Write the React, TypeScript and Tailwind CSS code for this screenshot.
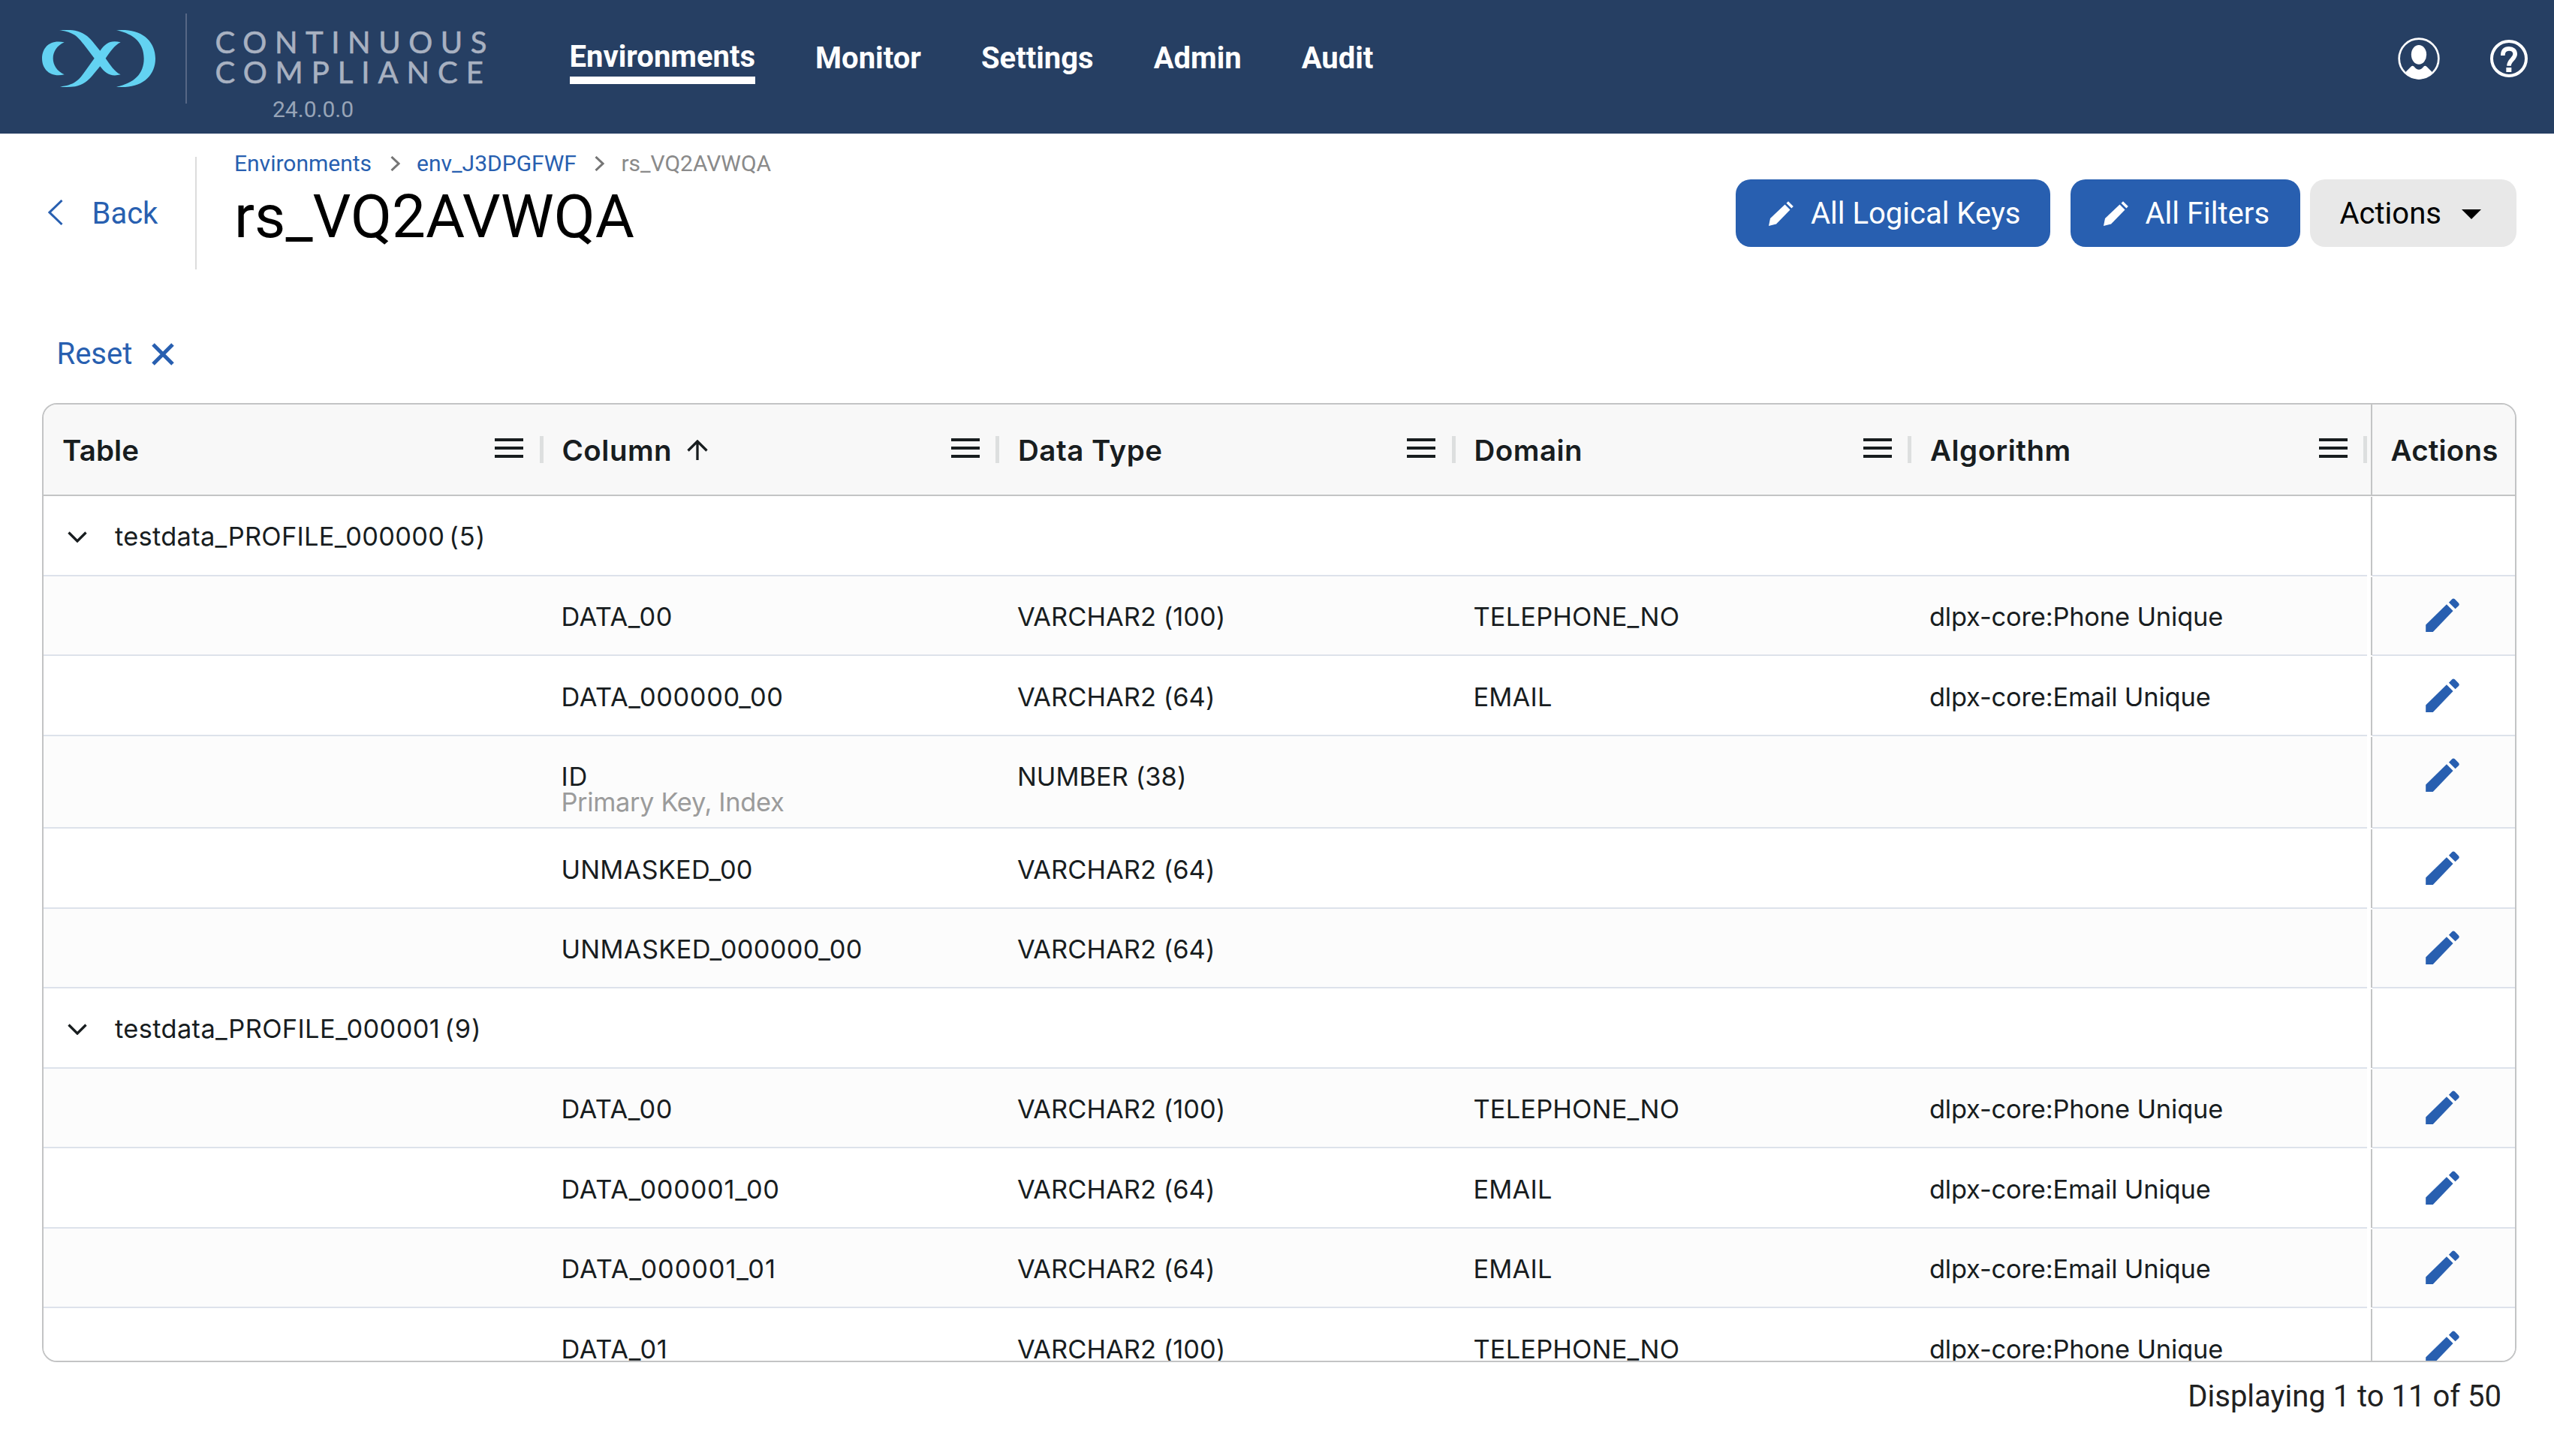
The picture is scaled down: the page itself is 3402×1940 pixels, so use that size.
import React from "react";

type Row =
  | { kind: "group"; name: string; count: number; spacing: string }
  | {
      kind: "data";
      column: string;
      spacing: string;
      note?: string;
      type: string;
      domain?: string;
      algorithm?: string;
    };

const PHONE = { domain: "TELEPHONE_NO", algorithm: "dlpx-core:Phone Unique" };
const EMAIL = { domain: "EMAIL", algorithm: "dlpx-core:Email Unique" };

const rows: Row[] = [
  { kind: "group", name: "testdata_PROFILE_000000", count: 5, spacing: "tracking-[0.3px]" },
  { kind: "data", column: "DATA_00", spacing: "tracking-[0.5px]", type: "VARCHAR2 (100)", ...PHONE },
  { kind: "data", column: "DATA_000000_00", spacing: "tracking-[0.6px]", type: "VARCHAR2 (64)", ...EMAIL },
  { kind: "data", column: "ID", spacing: "tracking-[0.8px]", note: "Primary Key, Index", type: "NUMBER (38)" },
  { kind: "data", column: "UNMASKED_00", spacing: "tracking-[0.2px]", type: "VARCHAR2 (64)" },
  { kind: "data", column: "UNMASKED_000000_00", spacing: "tracking-[0.3px]", type: "VARCHAR2 (64)" },
  { kind: "group", name: "testdata_PROFILE_000001", count: 9, spacing: "tracking-[0.37px]" },
  { kind: "data", column: "DATA_00", spacing: "tracking-[0.5px]", type: "VARCHAR2 (100)", ...PHONE },
  { kind: "data", column: "DATA_000001_00", spacing: "tracking-[0.7px]", type: "VARCHAR2 (64)", ...EMAIL },
  { kind: "data", column: "DATA_000001_01", spacing: "tracking-[0.9px]", type: "VARCHAR2 (64)", ...EMAIL },
  { kind: "data", column: "DATA_01", spacing: "tracking-[0.7px]", type: "VARCHAR2 (100)", ...PHONE },
];

function Logo() {
  return (
    <svg className="h-[76px] w-[151px] shrink-0" viewBox="78 60 453 228" fill="#63d2f2">
      <path d="M167 109C110 96 78 130 78 173C78 216 110 251 167 238C138 224 122 200 122 173C122 147 138 122 167 109Z" />
      <path d="M147 61C168 59 190 59 210 62C242 69 262 84 279 105L310 143C332 112 352 99 392 109C366 123 352 145 332 173C352 201 366 225 392 238C352 249 330 232 310 205L279 242C262 263 242 278 210 286C190 288 168 288 150 287C205 280 224 262 245 232L287 173L245 118C222 88 205 68 147 61Z" />
      <path d="M375 61C470 51 531 100 531 174C531 248 470 297 375 287C447 272 485 235 485 174C485 113 447 76 375 61Z" />
    </svg>
  );
}

function UserIcon() {
  return (
    <svg className="size-[56px] shrink-0" viewBox="132 150 168 168">
      <circle cx="216" cy="234" r="79" fill="none" stroke="#fff" strokeWidth="8" />
      <ellipse cx="216" cy="218.500" rx="30.500" ry="38.500" fill="#fff" />
      <path d="M163 288L184 267Q190 260 197 266C209 282 223 282 235 266Q241 260 248 267L269 288Q248 317 216 317Q184 317 163 288Z" fill="#fff" />
    </svg>
  );
}

function HelpIcon() {
  return (
    <svg className="size-[50px] shrink-0" viewBox="501 159 150 150">
      <circle cx="576" cy="234" r="69" fill="none" stroke="#fff" strokeWidth="12" />
      <path d="M551.500 222C551.500 203 560 194.500 576 194.500C592 194.500 600.500 203 600.500 216C600.500 236 576 240 576 263" fill="none" stroke="#fff" strokeWidth="17" />
      <path d="M565 270H586V288H565Z" fill="#fff" />
    </svg>
  );
}

function EditIcon() {
  return (
    <svg className="h-[45px] w-[45px] shrink-0" viewBox="0 0 135 136" fill="#285fb0">
      <path d="M0 136V107L84 25L110 51L29 136Z" />
      <path d="M93 17L106 4Q111 -1 117 4L131 18Q138 25 132 31L119 43Z" />
    </svg>
  );
}

function PencilIcon() {
  return (
    <svg className="size-[33px] shrink-0" viewBox="0 0 33 33" fill="#fff">
      <path d="M0 33L2 23L21.500 4.500L28.500 11.500L10 30.500Z" />
      <path d="M23.500 2.700L26 0.300L32.800 7L30.400 9.500Z" />
    </svg>
  );
}

function MenuIcon() {
  return (
    <div className="mt-[-4px] flex w-[38px] flex-col gap-[7.3px]">
      <div className="h-[3.8px] bg-[#181d1f]" />
      <div className="h-[3.8px] bg-[#181d1f]" />
      <div className="h-[3.8px] bg-[#181d1f]" />
    </div>
  );
}

function CrumbArrow() {
  return (
    <svg className="h-[20px] w-[13px] shrink-0" viewBox="0 0 13 20" fill="none" stroke="#757575" strokeWidth="3">
      <path d="M1.500 1L11 10L1.500 19" />
    </svg>
  );
}

function HeaderCell({ label, width, sorted }: { label: string; width: string; sorted?: boolean }) {
  return (
    <div className={`flex h-full items-center pl-[25px] ${width}`}>
      <span className="pt-[2px]">{label}</span>
      {sorted && (
        <svg className="ml-[20px] h-[27px] w-[28px]" viewBox="0 0 28 27" fill="none" stroke="#181d1f" strokeWidth="3.300">
          <path d="M14 27V2M1.500 14.500L14 2L26.500 14.500" />
        </svg>
      )}
      <div className="ml-auto flex items-center gap-[21.500px]">
        <MenuIcon />
        <div className="h-[36px] w-[5px] bg-[#dddfdf]" />
      </div>
    </div>
  );
}

function DataCell({ children, extra }: { children?: React.ReactNode; extra?: string }) {
  return <div className={`w-[607.5px] pt-px pl-[24.4px] ${extra ?? ""}`}>{children}</div>;
}

function TableRow({ row, striped }: { row: Row; striped: boolean }) {
  const tall = row.kind === "data" && !!row.note;
  const shade = striped ? "bg-[#fcfcfc]" : "bg-white";
  return (
    <div className={`flex shrink-0 ${tall ? "h-[123.9px]" : "h-[106.5px]"}`}>
      <div className={`flex w-[3095px] border-b-2 border-[#dde2eb] pt-[36.5px] leading-[34px] ${shade}`}>
        {row.kind === "group" ? (
          <div className="flex pl-[32px]">
            <svg className="mt-[10px] h-[15px] w-[26px]" viewBox="0 0 26 15" fill="none" stroke="#181d1f" strokeWidth="3.300">
              <path d="M1.500 1.500L13 13L24.500 1.500" />
            </svg>
            <span className={`ml-[37px] ${row.spacing}`}>{row.name}</span>
            <span className="ml-[6px] tracking-[1px]">({row.count})</span>
          </div>
        ) : (
          <>
            <div className="w-[665px]" />
            <DataCell>
              <div className={row.spacing}>{row.column}</div>
              {row.note && <div className="tracking-[-0.33px] text-[#9b9b9b]">{row.note}</div>}
            </DataCell>
            <DataCell extra="tracking-[0.04px]">{row.type}</DataCell>
            <DataCell extra="tracking-[0.2px]">{row.domain}</DataCell>
            <DataCell extra="tracking-[-0.16px]">{row.algorithm}</DataCell>
          </>
        )}
      </div>
      <div className="ml-[5px] w-[2px] py-px">
        <div className="h-full bg-[#c3c4c5]" />
      </div>
      <div className={`flex w-[190px] justify-center border-b-2 border-[#dde2eb] pt-[29.5px] pr-[3px] ${shade}`}>
        {row.kind === "data" && <EditIcon />}
      </div>
    </div>
  );
}

export default function App() {
  return (
    <div className="flex h-[1940px] w-[3402px] flex-col overflow-hidden bg-white font-['Roboto',sans-serif] text-[40px] leading-[48px] text-black">
      <header className="flex h-[178px] shrink-0 items-start bg-[#263f63] pr-[35px] pl-[56px]">
        <div className="mt-[40px]">
          <Logo />
        </div>
        <div className="mt-[18px] ml-[39.5px] h-[120px] w-[2.5px] bg-[#566785]" />
        <div className="mt-[36px] ml-[37.5px] w-[472px] font-['Lato',sans-serif] leading-[40px] text-[#a8b1c1]">
          <div className="tracking-[10.6px] [-webkit-text-stroke:0.6px_#a8b1c1]">CONTINUOUS</div>
          <div className="tracking-[10.97px] [-webkit-text-stroke:0.6px_#a8b1c1]">COMPLIANCE</div>
          <div className="mt-[12px] ml-[76.5px] font-['Roboto',sans-serif] text-[30px] leading-[36px] text-[#97a4b7]">24.0.0.0</div>
        </div>
        <nav className="mt-[52px] flex items-start gap-[80px] font-bold text-white">
          <div className="border-b-[10px] border-white pb-[2px]">Environments</div>
          <div className="mt-[2px]">Monitor</div>
          <div className="mt-[2px]">Settings</div>
          <div className="mt-[2px]">Admin</div>
          <div className="mt-[2px]">Audit</div>
        </nav>
        <div className="mt-[50px] ml-auto flex items-center gap-[67px]">
          <UserIcon />
          <HelpIcon />
        </div>
      </header>

      <div className="flex shrink-0 items-start pr-[50.5px]">
        <div className="mt-[83px] flex w-[260px] items-center pl-[64px] text-[#285fb0]">
          <svg className="mt-[-5px] h-[34px] w-[20px] shrink-0" viewBox="0 0 20 34" fill="none" stroke="#285fb0" strokeWidth="3">
            <path d="M18.500 1L2 17L18.500 33" />
          </svg>
          <span className="ml-[38.5px]">Back</span>
        </div>
        <div className="mt-[31px] h-[150px] w-[2px] bg-[#dcdcdc]" />
        <div className="mt-[21.5px] ml-[50px]">
          <div className="flex items-center text-[30px] leading-[36px]">
            <span className="text-[#285fb0]">Environments</span>
            <div className="ml-[25px]">
              <CrumbArrow />
            </div>
            <span className="ml-[22px] text-[#285fb0]">env_J3DPGFWF</span>
            <div className="ml-[24px]">
              <CrumbArrow />
            </div>
            <span className="ml-[22.5px] text-[#8a8a8a]">rs_VQ2AVWQA</span>
          </div>
          <h1 className="text-[80px] leading-[106px]">rs_VQ2AVWQA</h1>
        </div>
        <div className="mt-[61px] ml-auto flex">
          <button className="flex h-[90px] w-[419px] items-center rounded-[20px] bg-[#285fb0] pl-[44px] text-white">
            <PencilIcon />
            <span className="ml-[23px] pt-[2px]">All Logical Keys</span>
          </button>
          <button className="ml-[26.500px] flex h-[90px] w-[306px] items-center rounded-[20px] bg-[#285fb0] pl-[44px] text-white">
            <PencilIcon />
            <span className="ml-[23px] pt-[2px]">All Filters</span>
          </button>
          <button className="ml-[13.500px] flex h-[90px] w-[274.5px] items-center rounded-[20px] bg-[#e8e8e8] pl-[39.5px]">
            <span className="pt-[2px]">Actions</span>
            <svg className="mt-[2px] ml-[27px] h-[13px] w-[26px]" viewBox="0 0 26 13">
              <path d="M0 0H26L13 13Z" />
            </svg>
          </button>
        </div>
      </div>

      <div className="mt-[89px] flex shrink-0 items-center pl-[75.5px] text-[#285fb0]">
        <span>Reset</span>
        <svg className="ml-[25.5px] mt-[-1px] size-[30px]" viewBox="0 0 30 30" fill="none" stroke="#285fb0" strokeWidth="5">
          <path d="M2 2L28 28M28 2L2 28" />
        </svg>
      </div>

      <section className="mt-[41px] ml-[56px] flex h-[1278px] w-[3296px] shrink-0 flex-col overflow-hidden rounded-[20px] border-2 border-[#c3c4c5] bg-white font-['Inter',sans-serif] text-[34.4px] text-[#181d1f]">
        <div className="flex h-[122px] shrink-0 items-center border-b-2 border-[#c3c4c5] bg-[#f8f8f8] text-[38.5px] font-semibold tracking-[0.5px]">
          <HeaderCell label="Table" width="w-[665.5px] tracking-[0.1px]" />
          <HeaderCell label="Column" width="w-[607.5px]" sorted />
          <HeaderCell label="Data Type" width="w-[607.5px]" />
          <HeaderCell label="Domain" width="w-[607.5px]" />
          <HeaderCell label="Algorithm" width="w-[607px]" />
          <div className="ml-[5px] h-full w-[2px] bg-[#c3c4c5]" />
          <span className="pt-[2px] pl-[24.5px] tracking-[0.2px]">Actions</span>
        </div>
        {rows.map((row, i) => (
          <TableRow key={i} row={row} striped={i % 2 === 1} />
        ))}
      </section>

      <footer className="mt-[22px] pr-[70px] text-right text-[#212121]">Displaying 1 to 11 of 50</footer>
    </div>
  );
}
